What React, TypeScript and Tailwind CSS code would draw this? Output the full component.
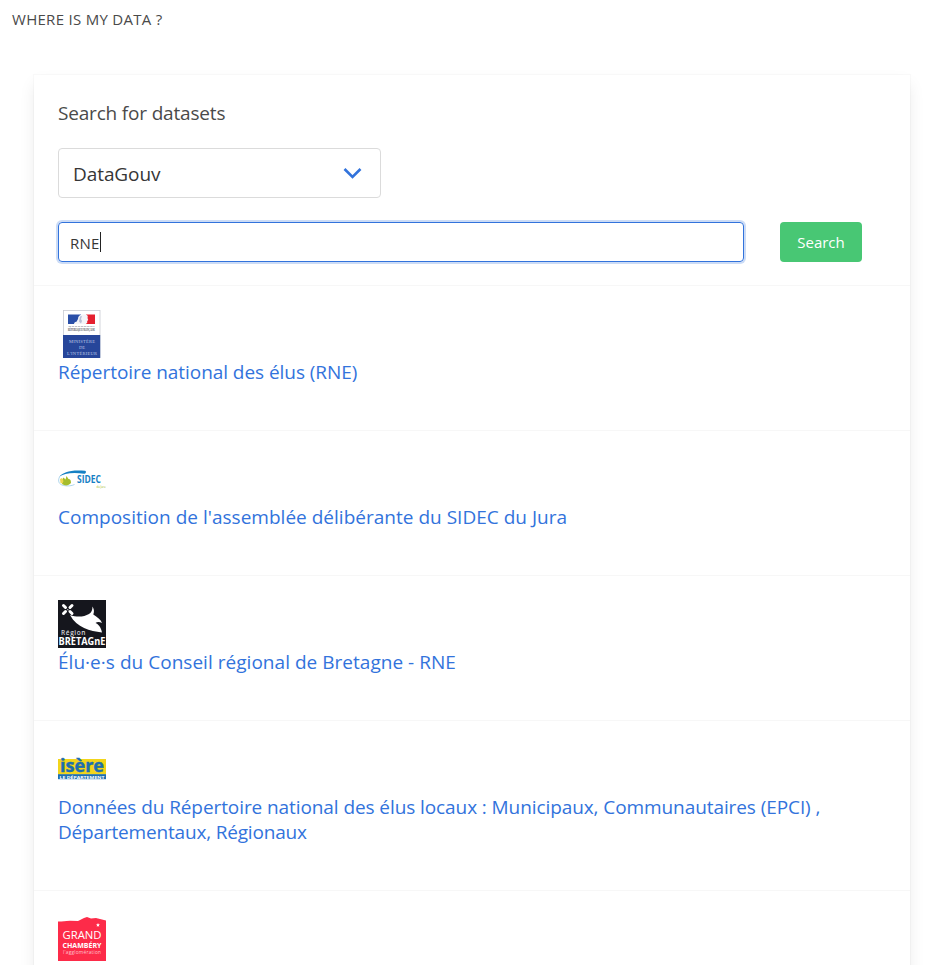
import type { ReactNode } from "react";

function MinistereLogo() {
  return (
    <svg width="48" height="48" viewBox="0 0 48 48" className="block">
      <rect x="5.500" y="0.5" width="36.500" height="47" fill="#fff" stroke="#c9cbd3" strokeWidth="0.8" />
      <rect x="10" y="4.500" width="13" height="9.500" fill="#2a4fa8" />
      <rect x="28" y="4.500" width="9" height="9.500" fill="#e5202f" />
      <path d="M16 14c0-1.500 1.200-2.500 2.500-2.300L20 9c0-3 2-4.500 4.500-4.500H28c2 .8 2 2 1.500 3.500l.7 2-1 1v2l-1.700 1z" fill="#f3f4f8" />
      <path d="M22 6.500l2-.5-1 3 1 2-1 2.500-2-2z" fill="#b7bfd6" />
      <path d="M10.500 16.500h26" stroke="#c0c1c8" strokeWidth="1" strokeDasharray="2.500 0.600" />
      <text x="23.500" y="20.500" textAnchor="middle" fontFamily="Liberation Serif, serif" fontWeight="700" fontSize="3.200" fill="#44464e" textLength="27" lengthAdjust="spacingAndGlyphs">RÉPUBLIQUE FRANÇAISE</text>
      <rect x="5" y="25" width="37.200" height="23" fill="#27469a" />
      <g fill="#bdc8e6" fontFamily="Liberation Serif, serif" fontSize="4.500" textAnchor="middle">
        <text x="24" y="33" textLength="26">MINISTÈRE</text>
        <text x="24" y="39" textLength="6">DE</text>
        <text x="24" y="45" textLength="30">L'INTÉRIEUR</text>
      </g>
    </svg>
  );
}

function SidecLogo() {
  return (
    <svg width="48" height="48" viewBox="0 0 48 48" className="block">
      <path d="M1 22C5 17 13 14.500 27 15.800c1.800.8.9 3-1 3C14 17.200 6 18.500 1 22z" fill="#1680c4" />
      <path d="M1.500 22c-2 4-.5 7.500 4 8.500 4 .8 8 .5 11-1" fill="none" stroke="#8cc4e2" strokeWidth="0.7" />
      <path d="M4 29l0-4 1.500-2.500 2 2 1-3.500 2 3c2-.5 2.500 2 2.500 4-2.500 3-6 3.200-9 1z" fill="#a6bd2c" />
      <path d="M2 24l2-1 1.500 3-1 2.500-2-.5z" fill="#f0d652" />
      <text x="19" y="28" fontFamily="Open Sans, sans-serif" fontWeight="700" fontSize="10" fill="#1680c4" textLength="24" lengthAdjust="spacingAndGlyphs">SIDEC</text>
      <text x="38.500" y="32.500" fontFamily="Open Sans, sans-serif" fontSize="2.800" fill="#a6bd2c" textLength="9">du Jura</text>
    </svg>
  );
}

function BretagneLogo() {
  return (
    <svg width="48" height="48" viewBox="0 0 48 48" className="block">
      <rect width="48" height="48" fill="#15161d" />
      <path d="M5.500 5.500l2 2M14 5.500l-2 2M5.500 13.500l2-2M14 13.500l-2-2" stroke="#fff" strokeWidth="3" strokeLinecap="round" />
      <path d="M9 9l1.500 1.500M10.500 9L9 10.500" stroke="#fff" strokeWidth="0.5" />
      <path d="M12 15c7 2.500 14 2 19-1 2.500-1.500 3.500-4 3.500-7.500 1.500 2.500 2 5 .8 8 4 2.500 7.500 5 8.700 8.500-2.500-1.500-5-1.500-6.500 0 3 1.500 5.500 4 6.500 9.500C32 31 19 28 12 15z" fill="#fff" />
      <text x="3" y="34.500" fontFamily="Open Sans, sans-serif" fontWeight="600" fontSize="6.500" fill="#d5d5d9" textLength="24.500">Région</text>
      <text x="0.500" y="45.300" fontFamily="Open Sans, sans-serif" fontWeight="700" fontSize="9.800" fill="#fff" textLength="47" lengthAdjust="spacingAndGlyphs">BRETAGnE</text>
    </svg>
  );
}

function IsereLogo() {
  return (
    <svg width="48" height="48" viewBox="0 0 48 48" className="block">
      <rect y="14" width="48" height="15.500" fill="#f2d51b" />
      <rect y="29.200" width="48" height="5" fill="#1e6eae" />
      <text x="2" y="27.300" fontFamily="Open Sans, sans-serif" fontWeight="700" fontSize="17" fill="#1e6eae" stroke="#1e6eae" strokeWidth="0.400" textLength="44" lengthAdjust="spacingAndGlyphs">isère</text>
      <text x="1.500" y="33.500" fontFamily="Open Sans, sans-serif" fontWeight="700" fontSize="4" fill="#fff" textLength="45" lengthAdjust="spacingAndGlyphs">LE DÉPARTEMENT</text>
    </svg>
  );
}

function ChamberyLogo() {
  return (
    <svg width="48" height="48" viewBox="0 0 48 48" className="block">
      <path d="M0 6.500c5 0 7-.5 12-.8l8 .3 6-3L29 2l4 1.500L38 3l10 2.500V46H0z" fill="#fd2b49" />
      <path d="M40 8l.6 1.200 1.300.2-1 .9.300 1.400-1.200-.6-1.200.6.200-1.400-.9-.9 1.300-.2z" fill="#fff" />
      <g fontFamily="Open Sans, sans-serif" fill="#fff">
        <text x="4.500" y="24" fontSize="10.500" textLength="39" lengthAdjust="spacingAndGlyphs">GRAND</text>
        <text x="4.500" y="32.500" fontWeight="700" fontSize="6.500" textLength="39" lengthAdjust="spacingAndGlyphs">CHAMBÉRY</text>
        <text x="5" y="39.300" fontSize="4.800" fill="#ffc2cb" textLength="38">l'agglomération</text>
      </g>
    </svg>
  );
}

const results: { logo: ReactNode; lines: { text: string; spacing: string }[] }[] = [
  { logo: <MinistereLogo />, lines: [{ text: "Répertoire national des élus (RNE)", spacing: "tracking-[-0.055px]" }] },
  { logo: <SidecLogo />, lines: [{ text: "Composition de l'assemblée délibérante du SIDEC du Jura", spacing: "tracking-[0.015px]" }] },
  { logo: <BretagneLogo />, lines: [{ text: "Élu·e·s du Conseil régional de Bretagne - RNE", spacing: "tracking-[0.03px]" }] },
  {
    logo: <IsereLogo />,
    lines: [
      { text: "Données du Répertoire national des élus locaux : Municipaux, Communautaires (EPCI) ,", spacing: "tracking-[-0.085px]" },
      { text: "Départementaux, Régionaux", spacing: "tracking-[-0.18px]" },
    ],
  },
  { logo: <ChamberyLogo />, lines: [] },
];

export default function App() {
  return (
    <div className="h-[965px] overflow-hidden bg-white px-3 pt-[7px] font-['Open_Sans',sans-serif] text-[#4a4a4a]">
      <p className="text-[15px] leading-6 tracking-[0.29px]">WHERE IS MY DATA ?</p>
      <main className="ml-[22px] mt-11 h-[940px] w-[876px] bg-white shadow-[0_8px_16px_-2px_rgba(10,10,10,0.1),0_0_0_1px_rgba(10,10,10,0.02)]">
        <section className="h-[210px] px-6 pt-[26px]">
          <h1 className="text-[19px] leading-[25px] tracking-[-0.18px]">Search for datasets</h1>
          <div className="mt-[22px] flex h-[50px] w-[323px] items-center justify-between rounded border border-[#dbdbdb] pl-[14px] pr-[18px] text-[19px] text-[#363636]">
            <span className="pt-0.5 tracking-[-0.08px]">DataGouv</span>
            <svg width="19" height="12" viewBox="0 0 19 12" fill="none" stroke="#3273dc" strokeWidth="2.600">
              <path d="M1.500 2l8 8 8-8" />
            </svg>
          </div>
          <div className="mt-6 flex">
            <div className="flex h-10 w-[686px] items-center rounded border border-[#3273dc] pl-[11px] text-[15px] text-[#363636] shadow-[0_0_0_2px_rgba(50,115,220,0.25)]">
              <span className="pt-0.5 tracking-[0.25px]">RNE</span>
              <span className="h-5 w-px bg-[#222]" />
            </div>
            <button className="ml-9 h-10 w-[82px] rounded bg-[#48c774] text-[15px] text-white">Search</button>
          </div>
        </section>
        {results.map((result, i) => (
          <article key={i} className="border-t border-[#f7f7f7] px-6 pb-[45px] pt-6">
            {result.logo}
            <h2 className="pt-0.5 text-[19px] leading-[25px] text-[#3273dc]">
              {result.lines.map((line) => (
                <span key={line.text} className={`block whitespace-nowrap ${line.spacing}`}>{line.text}</span>
              ))}
            </h2>
          </article>
        ))}
      </main>
    </div>
  );
}
